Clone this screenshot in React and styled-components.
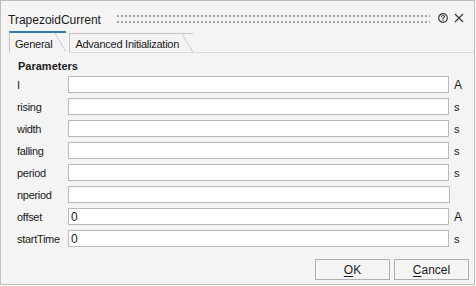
import React from 'react';
import styled, { createGlobalStyle } from 'styled-components';

const GlobalStyle = createGlobalStyle`
  html, body {
    margin: 0;
    padding: 0;
    background: #ffffff;
  }
  body {
    font-family: "Liberation Sans", Arial, sans-serif;
    color: #1b1b1b;
  }
`;

const params = [
  { name: 'I', unit: 'A', value: '' },
  { name: 'rising', unit: 's', value: '' },
  { name: 'width', unit: 's', value: '' },
  { name: 'falling', unit: 's', value: '' },
  { name: 'period', unit: 's', value: '' },
  { name: 'nperiod', unit: '', value: '' },
  { name: 'offset', unit: 'A', value: '0' },
  { name: 'startTime', unit: 's', value: '0' },
];

const HelpIcon = () => (
  <svg width="10" height="10" viewBox="0 0 10 10">
    <circle cx="5" cy="5" r="4.3" fill="none" stroke="#3a3a3a" strokeWidth="1.2" />
    <path d="M3.4 4 Q3.5 2.5 5 2.5 Q6.6 2.5 6.5 3.8 Q6.4 4.6 5 5.2 L5 5.9" fill="none" stroke="#3a3a3a" strokeWidth="1.1" />
    <rect x="4.4" y="6.6" width="1.2" height="1.2" fill="#3a3a3a" />
  </svg>
);

const CloseIcon = () => (
  <svg width="10" height="10" viewBox="0 0 10 10">
    <path d="M1 1 L9 9 M9 1 L1 9" stroke="#333" strokeWidth="1.1" />
  </svg>
);

const App = () => (
  <>
    <GlobalStyle />
    <Window>
      <TitleBar>
        <Title>TrapezoidCurrent</Title>
        <Gripper />
        <TitleButtons>
          <HelpIcon />
          <CloseIcon />
        </TitleButtons>
      </TitleBar>

      <TabStrip>
        <Tab active>General</Tab>
        <Tab>Advanced Initialization</Tab>
        <TabRest />
      </TabStrip>

      <Content>
        <Heading>Parameters</Heading>
        <ParamGrid>
          {params.map(p => (
            <React.Fragment key={p.name}>
              <Label>{p.name}</Label>
              <Field defaultValue={p.value} wide={!p.unit} />
              <Unit big={p.unit === 'A'}>{p.unit}</Unit>
            </React.Fragment>
          ))}
        </ParamGrid>
      </Content>

      <Footer>
        <Button><u>O</u>K</Button>
        <Button><u>C</u>ancel</Button>
      </Footer>
    </Window>
  </>
);

const Window = styled.div`
  box-sizing: border-box;
  width: 475px;
  height: 285px;
  border: 1px solid #bdbdbd;
  background: #f4f4f4;
  display: flex;
  flex-direction: column;
`;

const TitleBar = styled.div`
  height: 30px;
  display: flex;
  align-items: center;
  padding: 4px 10px 0 7px;
  box-sizing: border-box;
`;

const Title = styled.div`
  font-size: 12px;
  line-height: 16px;
  padding-top: 3px;
  color: #1a1a1a;
`;

const Gripper = styled.div`
  flex: 1;
  height: 8px;
  margin: 1px 8px 0 16px;
  background-image: conic-gradient(from 270deg at 2px 2px, #a4a4a4 25%, transparent 0);
  background-size: 4px 6px;
  background-repeat: repeat;
`;

const TitleButtons = styled.div`
  display: flex;
  align-items: center;
  gap: 6px;
  svg { display: block; }
`;

const TabStrip = styled.div`
  display: flex;
  align-items: flex-end;
  height: 22px;
  padding-left: 8px;
  gap: 3px;
`;

const Tab = styled.div`
  position: relative;
  box-sizing: border-box;
  height: ${p => (p.active ? '22px' : '20px')};
  padding: ${p => (p.active ? '4px 14px 0 5px' : '3px 14px 0 5px')};
  border-left: 1px solid #c4c4c4;
  border-top: ${p => (p.active ? '2px solid #2c7bb6' : '1px solid #c4c4c4')};
  border-bottom: ${p => (p.active ? '1px solid transparent' : '1px solid #dadada')};
  font-size: 11px;
  line-height: 14px;
  letter-spacing: -0.25px;
  color: #1a1a1a;
  white-space: nowrap;
  background-image: linear-gradient(to top right, transparent calc(50% - 0.7px), #c4c4c4, transparent calc(50% + 0.7px));
  background-size: 11px 100%;
  background-position: right top;
  background-repeat: no-repeat;
`;

const TabRest = styled.div`
  flex: 1;
  height: 0;
  border-bottom: 1px solid #dadada;
  margin-left: -3px;
`;

const Content = styled.div`
  padding: 6px 0 0 16px;
`;

const Heading = styled.div`
  font-size: 11px;
  font-weight: bold;
  line-height: 14px;
  margin-bottom: 3px;
  padding-left: 1px;
`;

const ParamGrid = styled.div`
  display: grid;
  grid-template-columns: 51px 381px 26px;
  grid-auto-rows: 17px;
  row-gap: 5px;
  align-items: center;
`;

const Label = styled.div`
  font-size: 11px;
  letter-spacing: -0.3px;
  color: #1a1a1a;
`;

const Field = styled.input`
  box-sizing: border-box;
  width: ${p => (p.wide ? '382px' : '381px')};
  height: 17px;
  border: 1px solid #b9b9b9;
  background: #fff;
  padding: 0 0 0 2px;
  margin: 0;
  font-family: "Liberation Sans", Arial, sans-serif;
  font-size: 12px;
  color: #1a1a1a;
  outline: none;
`;

const Unit = styled.div`
  padding-left: 5px;
  font-size: ${p => (p.big ? '12px' : '11px')};
  color: #1a1a1a;
`;

const Footer = styled.div`
  display: flex;
  justify-content: flex-end;
  gap: 4px;
  margin-top: 12px;
  padding-right: 5px;
`;

const Button = styled.button`
  box-sizing: border-box;
  width: 75px;
  height: 21px;
  border: 1px solid #b0b0b0;
  background: #f4f4f4;
  font-family: "Liberation Sans", Arial, sans-serif;
  font-size: 12px;
  color: #1a1a1a;
  padding: 0;
  u { text-underline-offset: 2px; }
`;

export default App;
